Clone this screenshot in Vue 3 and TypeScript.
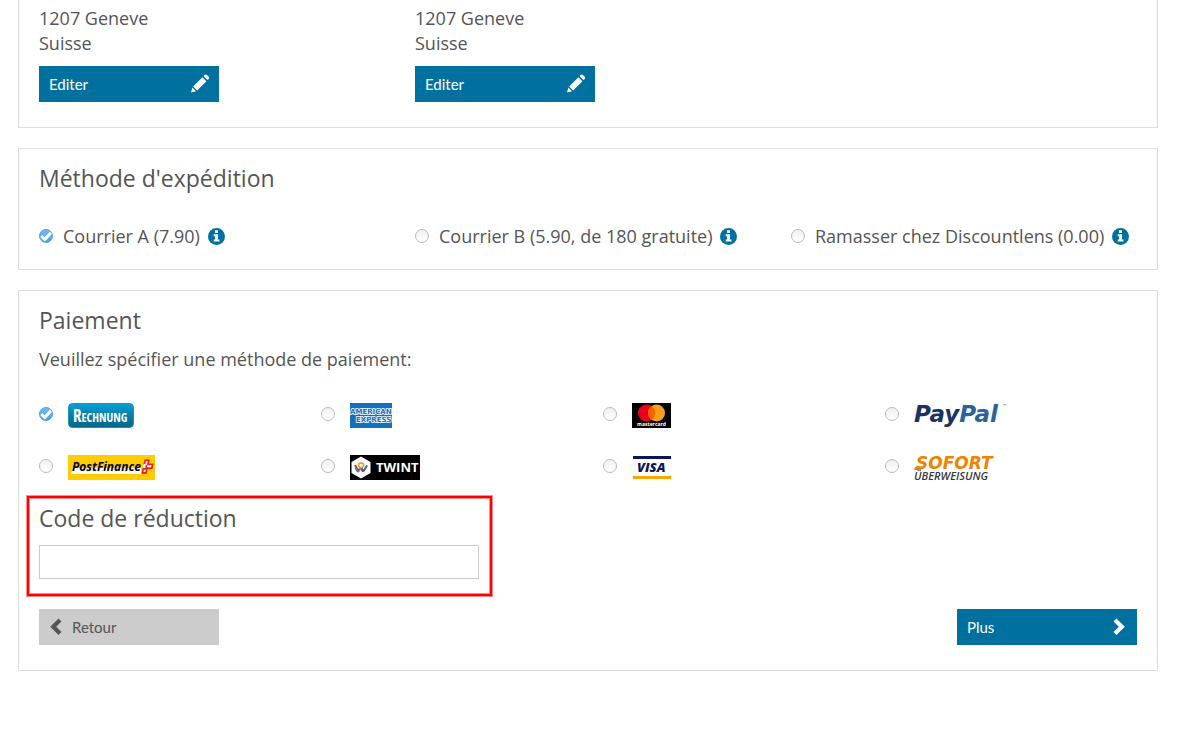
<script setup lang="ts">
import { ref } from 'vue'

interface Shipping {
  id: string
  label: string
}

interface Payment {
  id: string
  name: string
}

const addresses: string[][] = [
  ['1207 Geneve', 'Suisse'],
  ['1207 Geneve', 'Suisse'],
]

const shippings: Shipping[] = [
  { id: 'a', label: 'Courrier A (7.90)' },
  { id: 'b', label: 'Courrier B (5.90, de 180 gratuite)' },
  { id: 'pickup', label: 'Ramasser chez Discountlens (0.00)' },
]

const payments: Payment[] = [
  { id: 'rechnung', name: 'Rechnung' },
  { id: 'amex', name: 'American Express' },
  { id: 'mastercard', name: 'Mastercard' },
  { id: 'paypal', name: 'PayPal' },
  { id: 'postfinance', name: 'PostFinance' },
  { id: 'twint', name: 'Twint' },
  { id: 'visa', name: 'Visa' },
  { id: 'sofort', name: 'Sofort Überweisung' },
]

const shipping = ref('a')
const payment = ref('rechnung')
const code = ref('')
</script>

<template>
  <main class="checkout">
    <section class="panel panel-address">
      <div class="grid-three">
        <div v-for="(lines, i) in addresses" :key="i">
          <div v-for="line in lines" :key="line">{{ line }}</div>
          <button type="button" class="btn btn-primary btn-edit">
            <span>Editer</span>
            <svg width="20" height="20" viewBox="0 0 20 20" aria-hidden="true">
              <path fill="#fff" d="M1 18.5 2.4 13.6 6 17.2ZM3.2 12.4 12.4 3.2 16.4 7.2 7.2 16.4ZM13.5 2.1 14.6 1Q15.8 0 17 1L18.7 2.7Q19.6 3.8 18.7 5L17.5 6.1Z" />
            </svg>
          </button>
        </div>
      </div>
    </section>

    <section class="panel panel-shipping">
      <h2>Méthode d'expédition</h2>
      <div class="grid-three">
        <div v-for="s in shippings" :key="s.id" class="ship">
          <input :id="'ship-' + s.id" v-model="shipping" type="radio" name="shipping" :value="s.id" />
          <label :for="'ship-' + s.id">{{ s.label }}</label>
          <button type="button" class="info" :aria-label="s.label">
            <svg width="17" height="17" viewBox="0 0 17 17" aria-hidden="true">
              <circle cx="8.5" cy="8.5" r="8.5" fill="#00719f" />
              <path fill="#fff" d="M7 2.3H10V5H7ZM5.7 6.3H10V11.6H11.5V13.6H5.7V11.6H7V8.3H5.7Z" />
            </svg>
          </button>
        </div>
      </div>
    </section>

    <section class="panel panel-payment">
      <h2>Paiement</h2>
      <p class="hint">Veuillez spécifier une méthode de paiement:</p>
      <div class="grid-four">
        <div v-for="p in payments" :key="p.id" class="pay">
          <input :id="'pay-' + p.id" v-model="payment" type="radio" name="payment" :value="p.id" />
          <label :for="'pay-' + p.id" :aria-label="p.name">
            <svg v-if="p.id === 'rechnung'" width="66" height="25" viewBox="0 0 66 25">
              <defs>
                <linearGradient id="bill" x1="0" y1="0" x2="0" y2="1">
                  <stop offset="0" stop-color="#0aa0d8" />
                  <stop offset="0.5" stop-color="#047fa8" />
                  <stop offset="1" stop-color="#04668a" />
                </linearGradient>
              </defs>
              <rect x="0.5" y="0.5" width="65" height="24" rx="4" fill="url(#bill)" stroke="#1a91b8" />
              <text x="5" y="19" class="narrow" fill="#fff" font-size="17">R<tspan font-size="12">ECHNUNG</tspan></text>
            </svg>
            <svg v-else-if="p.id === 'amex'" width="42" height="25" viewBox="0 0 42 25">
              <rect width="42" height="25" fill="#1270bd" />
              <g class="amex" font-size="7">
                <text x="0" y="11">AMERICAN</text>
                <text x="6" y="19">EXPRESS</text>
              </g>
            </svg>
            <svg v-else-if="p.id === 'mastercard'" width="39" height="25" viewBox="0 0 39 25">
              <rect width="39" height="25" fill="#000" />
              <circle cx="14.5" cy="10" r="8.5" fill="#eb001b" />
              <circle cx="24.5" cy="10" r="8.5" fill="#f79e1b" />
              <path d="M19.5 3.1A8.5 8.5 0 0 1 19.5 16.9A8.5 8.5 0 0 1 19.5 3.1Z" fill="#ff5f00" />
              <text x="19.5" y="23" text-anchor="middle" class="sans" font-weight="700" fill="#fff" font-size="5">mastercard</text>
            </svg>
            <svg v-else-if="p.id === 'paypal'" width="96" height="25" viewBox="0 0 96 25" class="spill">
              <text x="0" y="19" class="wide" font-style="italic" font-size="23" fill="#1c3263">Pay<tspan fill="#2b6399">Pal</tspan></text>
              <text x="89" y="4" class="sans" font-size="4" fill="#25639b">™</text>
            </svg>
            <svg v-else-if="p.id === 'postfinance'" width="87" height="25" viewBox="0 0 87 25">
              <rect width="87" height="25" fill="#fc0" />
              <path d="M5 13H73V19H3Z" fill="#fff" />
              <text x="4" y="16" class="sans" font-style="italic" font-weight="700" font-size="12" fill="#000">PostFinance</text>
              <path d="M77 5H81L80 9.5H85L84 13.5H79.2L78.2 18H73.6L74.6 14" fill="#fff" />
              <path d="M76.3 9 77.2 5.4H80.8L79.9 9.4H84.6L83.8 13.2H79L78 17.8H74.4L75.3 13.8H78.3V10" fill="none" stroke="#e8211d" stroke-width="1.7" />
            </svg>
            <svg v-else-if="p.id === 'twint'" width="70" height="25" viewBox="0 0 70 25">
              <rect width="70" height="25" fill="#000" />
              <path d="M11 1.5 20.5 7V18L11 23.5 1.5 18V7Z" fill="#fff" />
              <path d="M5 10 7.7 15.2Q8.3 16 9 15L10.8 12.3" fill="none" stroke="#e92a2a" stroke-width="2" />
              <path d="M5.5 13.2 7.5 16.2Q8.2 17 9 16" fill="none" stroke="#188bd3" stroke-width="1.8" />
              <path d="M8.5 10.7Q8 8 11 8T13.5 10.7L11 14.2Z" fill="none" stroke="#f39a18" stroke-width="1.7" />
              <path d="M11.2 13 12.8 15.4Q13.5 16.6 14.2 15.3L17 10.2" fill="none" stroke="#1679c8" stroke-width="2" />
              <path d="M11 14 12.6 16.2 14.3 15.2" fill="none" stroke="#e92a2a" stroke-width="1.5" />
              <text x="26" y="17" class="sans" font-weight="700" fill="#fff" font-size="13">TWINT</text>
            </svg>
            <svg v-else-if="p.id === 'visa'" width="39" height="25" viewBox="0 0 39 25">
              <path d="M1 1H39V4H1Z" fill="#0e1560" />
              <path d="M1 21H39V24H1Z" fill="#f7a600" />
              <text x="5" y="17" class="sans" font-style="italic" font-weight="800" fill="#0e1560" font-size="13">VISA</text>
            </svg>
            <svg v-else width="82" height="25" viewBox="0 0 82 25" class="spill">
              <text x="2" y="14" class="wide" font-style="italic" fill="#ef8200" font-size="17">SOFORT</text>
              <path d="M1 12H8L7 15H0Z" fill="#ef8200" />
              <text x="0" y="25" class="sans" font-style="italic" font-weight="600" fill="#38383a" font-size="11">ÜBERWEISUNG</text>
            </svg>
          </label>
        </div>
      </div>

      <div class="discount">
        <h2><label for="code">Code de réduction</label></h2>
        <input id="code" v-model="code" type="text" class="code" />
      </div>

      <div class="actions">
        <button type="button" class="btn btn-back">
          <svg width="13" height="18" viewBox="0 0 13 18" aria-hidden="true">
            <path d="M11 2 4.2 8.8 11 15.6" fill="none" stroke="#555" stroke-width="4.2" />
          </svg>
          <span>Retour</span>
        </button>
        <button type="button" class="btn btn-primary">
          <span>Plus</span>
          <svg width="16" height="18" viewBox="0 0 16 18" aria-hidden="true">
            <path d="M4 2 10.8 8.8 4 15.6" fill="none" stroke="#fff" stroke-width="4.2" />
          </svg>
        </button>
      </div>
    </section>
  </main>
</template>

<style>
body {
  margin: 0;
  background: #fff;
}
</style>

<style scoped>
.checkout {
  padding: 0 31px 20px 18px;
  font: 18px/25px "Open Sans", "Noto Sans", sans-serif;
  color: #555;
}

.panel {
  box-sizing: border-box;
  margin-bottom: 20px;
  padding: 12px 20px 25px;
  border: 1px solid #ddd;
}

.panel-address {
  padding-top: 6px;
  border-top: 0;
}

.panel-shipping {
  padding-bottom: 20px;
}

h2 {
  margin: 0;
  font-size: 23px;
  font-weight: 400;
  line-height: 34px;
}

.grid-three,
.grid-four {
  display: grid;
  grid-template-columns: repeat(3, minmax(0, 1fr));
  column-gap: 30px;
}

.panel-shipping .grid-three {
  margin-top: 29px;
}

.grid-four {
  grid-template-columns: repeat(4, minmax(0, 1fr));
  row-gap: 27px;
  margin-top: 31px;
}

.hint {
  margin: 10px 0 0;
}

.ship {
  display: flex;
  align-items: center;
  white-space: nowrap;
}

.ship label {
  margin: 0 8px 0 10px;
}

.pay {
  display: flex;
  align-items: center;
  height: 25px;
}

.pay label {
  display: flex;
  margin-left: 15px;
}

input[type='radio'] {
  appearance: none;
  box-sizing: border-box;
  flex: none;
  width: 14px;
  height: 14px;
  margin: 0 0 2px;
  border: 1px solid #bbb;
  border-radius: 50%;
  background: linear-gradient(#f0f0f0, #fff);
}

.pay input[type='radio'] {
  margin-bottom: 4px;
}

input[type='radio']:checked {
  border-color: #4f9fe0;
  background:
    url("data:image/svg+xml,%3Csvg xmlns='http://www.w3.org/2000/svg' viewBox='0 0 14 14'%3E%3Cpath d='M2.2 7.2 5.8 10.4 12.4 3.4' fill='none' stroke='white' stroke-width='3'/%3E%3C/svg%3E") border-box,
    linear-gradient(#75baf5, #4b9fe5) border-box;
}

.info {
  display: flex;
  padding: 0;
  border: 0;
  background: none;
}

.spill {
  overflow: visible;
}

.sans {
  font-family: "Open Sans", "Noto Sans", sans-serif;
}

.wide {
  font-family: "DejaVu Sans", sans-serif;
  font-weight: 700;
}

.narrow {
  font-family: "Liberation Sans Narrow", "Open Sans Condensed", "Open Sans", sans-serif;
  font-weight: 600;
}

.amex {
  font-family: "DejaVu Sans", sans-serif;
  font-weight: 700;
  fill: #1270bd;
  stroke: #fff;
  stroke-width: 1.5px;
  paint-order: stroke;
}

.discount {
  position: relative;
  margin-top: 21px;
}

.discount::after {
  content: '';
  position: absolute;
  inset: -5px auto -17px -12px;
  box-sizing: border-box;
  width: calc((100% + 30px) * 5 / 12 - 5px);
  border: 2px solid #f00;
  box-shadow: 0 0 0 1px rgba(255, 0, 0, 0.45), inset 0 0 0 1px rgba(255, 0, 0, 0.45);
  pointer-events: none;
}

.code {
  display: block;
  box-sizing: border-box;
  width: calc((100% + 30px) * 5 / 12 - 30px);
  height: 34px;
  margin: 10px 0 0;
  padding: 0 10px;
  border: 1px solid #ccc;
  background: #fff;
  font: inherit;
  color: inherit;
}

.actions {
  display: flex;
  justify-content: space-between;
  margin-top: 30px;
}

.btn {
  display: flex;
  align-items: center;
  box-sizing: border-box;
  width: 180px;
  height: 36px;
  padding: 0 10px;
  border: 0;
  font: 15px/20px Lato, "Open Sans", sans-serif;
}

.btn-primary {
  justify-content: space-between;
  background: #00719f;
  color: #fff;
}

.btn-edit {
  margin-top: 10px;
  padding-right: 9px;
}

.btn-back {
  gap: 10px;
  background: #ccc;
  color: #555;
}
</style>
